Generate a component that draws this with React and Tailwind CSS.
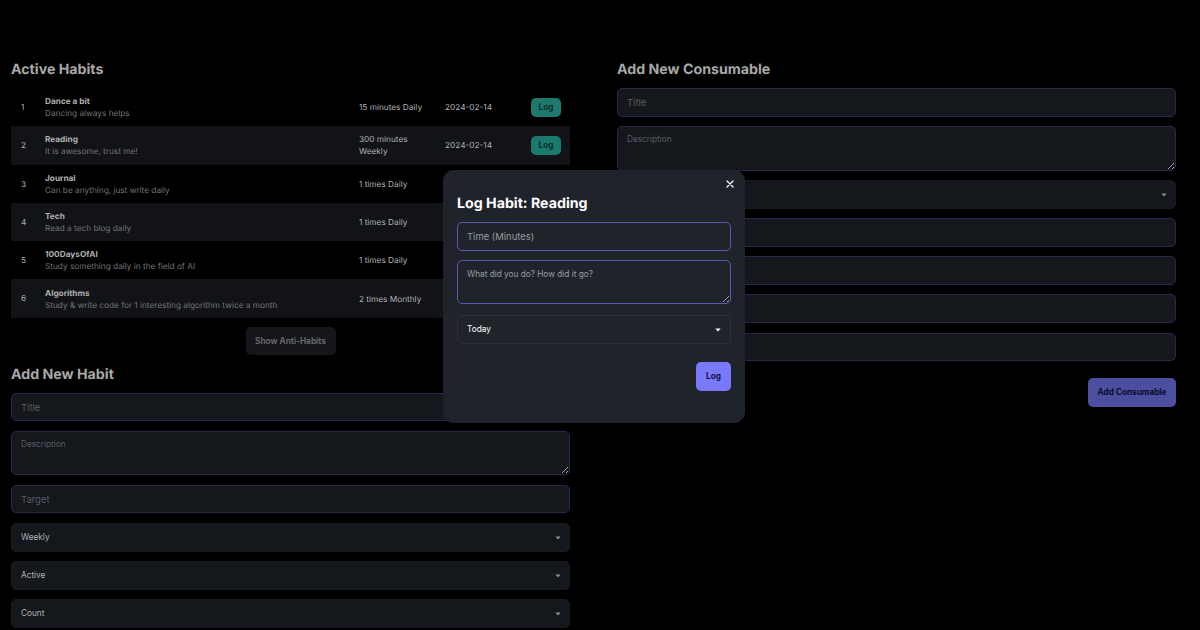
import React from 'react';

const habits = [
    { id: 1, name: 'Dance a bit', desc: 'Dancing always helps', target: '15 minutes Daily', date: '2024-02-14', log: true },
    { id: 2, name: 'Reading', desc: 'It is awesome, trust me!', target: '300 minutes Weekly', date: '2024-02-14', log: true },
    { id: 3, name: 'Journal', desc: 'Can be anything, just write daily', target: '1 times Daily' },
    { id: 4, name: 'Tech', desc: 'Read a tech blog daily', target: '1 times Daily' },
    { id: 5, name: '100DaysOfAI', desc: 'Study something daily in the field of AI', target: '1 times Daily' },
    { id: 6, name: 'Algorithms', desc: 'Study & write code for 1 interesting algorithm twice a month', target: '2 times Monthly' },
];

const Caret = ({ className }) => (
    <svg className={className} width="6" height="4" viewBox="0 0 6 4" fill="currentColor">
        <path d="M0.4 0.4h5.2L3 3.6z" />
    </svg>
);

const Input = ({ placeholder }) => (
    <input
        placeholder={placeholder}
        className="block w-full h-[28.5px] rounded-[5px] border border-[#29274f] bg-[#14171c] px-[9px] text-[9.45px] text-[#a6a6a6] placeholder:text-[#5a5d62] outline-none"
    />
);

const Textarea = ({ placeholder }) => (
    <textarea
        placeholder={placeholder}
        className="block w-full h-[44.5px] rounded-[5px] border border-[#29274f] bg-[#14171c] px-[9px] py-[6px] text-[8.26px] leading-[12px] text-[#a6a6a6] placeholder:text-[#5a5d62] outline-none"
    />
);

const Select = ({ value }) => (
    <div className="relative">
        <select
            defaultValue={value}
            className="block w-full h-[28.5px] appearance-none rounded-[5px] border border-[#181b20] bg-[#14171c] px-[9px] text-[8.26px] text-[#b0b2b5] outline-none"
        >
            <option>{value}</option>
        </select>
        <Caret className="absolute right-[9px] top-[13px] text-[#8c8f93]" />
    </div>
);

const App = () => {
    return (
        <div className="relative h-[630px] w-[1200px] overflow-hidden bg-black font-['Inter',sans-serif] [text-rendering:geometricPrecision]">
            <div className="grid grid-cols-[559px_559px] gap-x-[47px] pl-[11px] pt-[60px]">
                {/* Habits column */}
                <div>
                    <h2 className="text-[14.2px] leading-[20px] font-bold text-[#a8a8a8] mb-[8px]">Active Habits</h2>
                    <table className="w-full table-fixed border-collapse text-[8.26px]">
                        <colgroup>
                            <col className="w-[34px]" />
                            <col className="w-[314px]" />
                            <col className="w-[86px]" />
                            <col className="w-[86px]" />
                            <col className="w-[39px]" />
                        </colgroup>
                        <tbody>
                            {habits.map((h) => (
                                <tr key={h.id} className={`h-[38.3px] ${h.id % 2 === 0 ? 'bg-[#111317]' : ''}`}>
                                    <td className="pl-[10px] text-[#b0b2b5]">{h.id}</td>
                                    <td className="leading-[12px]">
                                        <div className="font-bold text-[#b0b0b0]">{h.name}</div>
                                        <div className="text-[#73757a]">{h.desc}</div>
                                    </td>
                                    <td className="pr-[12px] leading-[12px] text-[#b0b2b5]">{h.target}</td>
                                    <td className="text-[#b0b2b5]">{h.date}</td>
                                    <td>
                                        {h.log && (
                                            <button className="block h-[19px] w-[30px] rounded-[5px] bg-[#1b7a6d] text-[8.26px] font-bold text-[#0a2f2a]">
                                                Log
                                            </button>
                                        )}
                                    </td>
                                </tr>
                            ))}
                        </tbody>
                    </table>
                    <div className="flex justify-center mt-[9px]">
                        <button className="h-[28px] w-[90px] rounded-[5px] bg-[#14161a] text-[8.26px] font-bold text-[#66686b]">
                            Show Anti-Habits
                        </button>
                    </div>

                    <h2 className="mt-[10px] mb-[8px] text-[14.2px] leading-[20px] font-bold text-[#a8a8a8]">Add New Habit</h2>
                    <div className="space-y-[9.6px]">
                        <Input placeholder="Title" />
                        <Textarea placeholder="Description" />
                        <Input placeholder="Target" />
                        <Select value="Weekly" />
                        <Select value="Active" />
                        <Select value="Count" />
                    </div>
                </div>

                {/* Consumable column */}
                <div>
                    <h2 className="text-[14.2px] leading-[20px] font-bold text-[#a8a8a8] mb-[8px]">Add New Consumable</h2>
                    <div className="space-y-[9.6px]">
                        <Input placeholder="Title" />
                        <Textarea placeholder="Description" />
                        <Select value="" />
                        <Input />
                        <Input />
                        <Input />
                        <Input />
                    </div>
                    <div className="flex justify-end mt-[17px]">
                        <button className="h-[29px] w-[88px] rounded-[5px] bg-[#4c4e9f] text-[8.26px] font-bold text-[#0b0b2a]">
                            Add Consumable
                        </button>
                    </div>
                </div>
            </div>

            {/* Log modal */}
            <div className="absolute left-[443px] top-[170px] h-[253px] w-[302px] rounded-[11px] bg-[#1f242b] px-[14px] pt-[24px]">
                <button className="absolute right-[10px] top-[9px] text-white">
                    <svg width="10" height="10" viewBox="0 0 10 10" fill="none" stroke="currentColor" strokeWidth="1.2" strokeLinecap="round">
                        <path d="M2 2l6 6M8 2l-6 6" />
                    </svg>
                </button>
                <h3 className="text-[14.2px] leading-[20px] font-bold text-white mb-[8px]">Log Habit: Reading</h3>
                <input
                    placeholder="Time (Minutes)"
                    className="block w-full h-[29px] rounded-[5px] border border-[#5a5ab4] bg-[#1f242b] px-[9px] text-[9.45px] text-white placeholder:text-[#9a9da1] outline-none"
                />
                <textarea
                    placeholder="What did you do? How did it go?"
                    className="mt-[9px] block w-full h-[44px] rounded-[5px] border border-[#5a5ab4] bg-[#1f242b] px-[9px] py-[6.5px] text-[8.26px] leading-[12px] text-white placeholder:text-[#9a9da1] outline-none"
                />
                <div className="relative mt-[10.5px]">
                    <select
                        defaultValue="Today"
                        className="block w-full h-[29px] appearance-none rounded-[5px] border border-[#2c3138] bg-[#1f242b] px-[9px] text-[8.26px] text-white outline-none"
                    >
                        <option>Today</option>
                    </select>
                    <Caret className="absolute right-[10px] top-[13px] text-white" />
                </div>
                <div className="flex justify-end mt-[18.5px]">
                    <button className="h-[29px] w-[35px] rounded-[5px] bg-[#7879fb] text-[8.26px] font-bold text-[#10103c]">
                        Log
                    </button>
                </div>
            </div>
        </div>
    );
};

export default App;
